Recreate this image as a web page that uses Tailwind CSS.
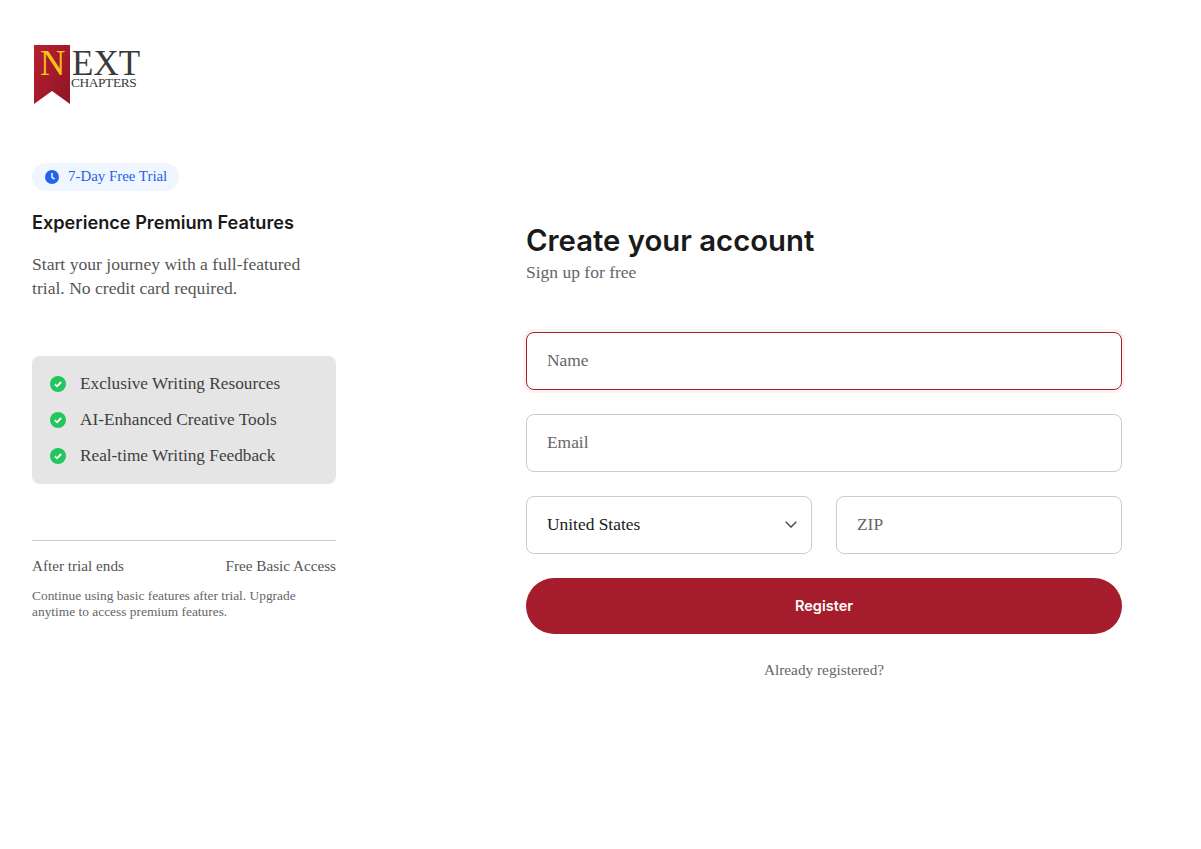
<!DOCTYPE html>
<html lang="en">
<head>
    <meta charset="UTF-8">
    <meta name="viewport" content="width=device-width, initial-scale=1.0">
    <title>Register - Next Chapters</title>
    <script src="https://cdn.jsdelivr.net/npm/@tailwindcss/browser@4"></script>
</head>
<body class="bg-white min-h-screen font-['Liberation_Serif',serif]">
<div class="flex">
    <!-- left panel -->
    <aside class="w-[368px] shrink-0 px-8 pt-[44px]">
        <div class="relative w-[112px] h-[62px] ml-px">
            <svg width="36" height="60" viewBox="0 0 36 60" class="absolute left-px top-px">
                <defs>
                    <linearGradient id="ribbon" x1="0" y1="0" x2="1" y2="1">
                        <stop offset="0" stop-color="#b81f30"/>
                        <stop offset="1" stop-color="#8e1526"/>
                    </linearGradient>
                </defs>
                <path d="M0 0H36V59L18 46L0 59Z" fill="url(#ribbon)"/>
            </svg>
            <span class="absolute left-[7px] top-[7px] text-[35px] leading-[26px] text-[#f5c518]">N</span>
            <span class="absolute left-[39px] top-[7px] text-[35px] leading-[26px] text-[#3a3a3a]">EXT</span>
            <span class="absolute left-[38px] top-[34px] text-[13.4px] leading-[10px] text-[#3a3a3a] tracking-[-0.4px]">CHAPTERS</span>
        </div>

        <div class="mt-[57px] inline-flex items-center gap-[9px] h-7 pl-[13px] pr-3 rounded-full bg-[#eff6ff] text-[#2563eb] text-[14.9px]">
            <svg width="14" height="14" viewBox="0 0 16 16">
                <circle cx="8" cy="8" r="8" fill="#2563eb"/>
                <path d="M8 3.5V8.3L11 10.5" fill="none" stroke="#eff6ff" stroke-width="1.8"/>
            </svg>
            <span class="-mt-px">7-Day Free Trial</span>
        </div>

        <h2 class="mt-[17px] text-[18.15px] leading-[28px] font-semibold text-[#1a1a1a] font-['Inter',sans-serif]">Experience Premium Features</h2>
        <p class="mt-[16px] w-[290px] text-[17.6px] leading-[24px] text-[#555555]">Start your journey with a full-featured trial. No credit card required.</p>

        <ul class="mt-[56px] h-32 rounded-lg bg-[#e5e5e5] px-[18px] flex flex-col justify-center gap-4 text-[17.25px] leading-5 text-[#3f3f3f]">
            <li class="flex items-center gap-[14px]">
                <svg width="16" height="16" viewBox="0 0 16 16"><circle cx="8" cy="8" r="8" fill="#22c55e"/><path d="M4.8 8.2L7 10.3L11.2 6" fill="none" stroke="#fff" stroke-width="1.8"/></svg>
                <span>Exclusive Writing Resources</span>
            </li>
            <li class="flex items-center gap-[14px]">
                <svg width="16" height="16" viewBox="0 0 16 16"><circle cx="8" cy="8" r="8" fill="#22c55e"/><path d="M4.8 8.2L7 10.3L11.2 6" fill="none" stroke="#fff" stroke-width="1.8"/></svg>
                <span>AI-Enhanced Creative Tools</span>
            </li>
            <li class="flex items-center gap-[14px]">
                <svg width="16" height="16" viewBox="0 0 16 16"><circle cx="8" cy="8" r="8" fill="#22c55e"/><path d="M4.8 8.2L7 10.3L11.2 6" fill="none" stroke="#fff" stroke-width="1.8"/></svg>
                <span>Real-time Writing Feedback</span>
            </li>
        </ul>

        <div class="mt-14 border-t border-[#cccccc] pt-[15px]">
            <div class="flex justify-between text-[15.2px] leading-5 text-[#555555]">
                <span>After trial ends</span>
                <span>Free Basic Access</span>
            </div>
            <p class="mt-[12px] w-[280px] text-[13.4px] leading-4 text-[#666666]">Continue using basic features after trial. Upgrade anytime to access premium features.</p>
        </div>
    </aside>

    <!-- form -->
    <main class="w-[596px] ml-[158px] pt-[222px]">
        <h1 class="text-[29.3px] leading-[38px] font-semibold text-[#1a1a1a] font-['Inter',sans-serif]">Create your account</h1>
        <p class="text-[17.5px] leading-6 text-[#666666]">Sign up for free</p>

        <form class="mt-12 flex flex-col gap-6" onsubmit="return false">
            <input type="text" placeholder="Name" class="w-full h-[58px] px-[20px] pb-0.5 rounded-lg border border-[#a51c2c] shadow-[0_0_0_3px_rgba(165,28,44,0.06)] text-[17.4px] outline-none placeholder:text-[#666666]">
            <input type="email" placeholder="Email" class="w-full h-[58px] px-[20px] pb-0.5 rounded-lg border border-[#cccccc] text-[17.4px] outline-none placeholder:text-[#666666]">
            <div class="grid grid-cols-2 gap-6">
                <div class="relative">
                    <select class="w-full h-[58px] px-[20px] pb-0.5 rounded-lg border border-[#cccccc] bg-white text-[17.4px] text-[#1a1a1a] appearance-none outline-none">
                        <option>United States</option>
                    </select>
                    <svg width="12" height="7" viewBox="0 0 12 7" class="absolute right-[15px] top-[25px]"><path d="M0.7 0.7L6 6L11.3 0.7" fill="none" stroke="#555555" stroke-width="1.6"/></svg>
                </div>
                <input type="text" placeholder="ZIP" class="w-full min-w-0 h-[58px] px-[20px] pb-0.5 rounded-lg border border-[#cccccc] text-[17.4px] outline-none placeholder:text-[#666666]">
            </div>
            <button type="submit" class="w-full h-14 rounded-full bg-[#a51c2c] text-white text-[14.5px] font-semibold font-['Inter',sans-serif]">Register</button>
        </form>

        <p class="mt-[26px] text-center text-[15.3px] leading-5 text-[#666666]">Already registered?</p>
    </main>
</div>
</body>
</html>
